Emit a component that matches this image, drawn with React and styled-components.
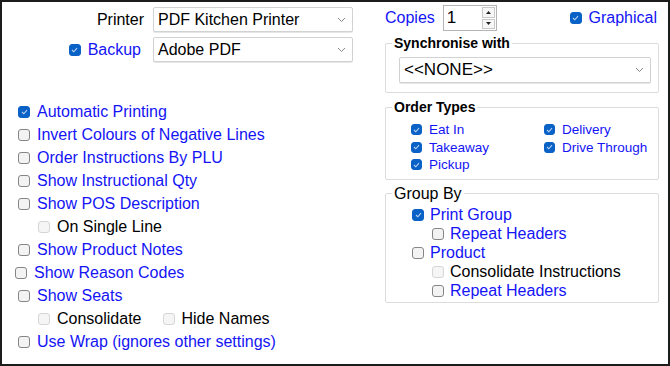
import React from "react";
import styled, { createGlobalStyle } from "styled-components";

const GlobalStyle = createGlobalStyle`
  html, body { margin: 0; padding: 0; background: #fff; }
  body { font-family: "Liberation Sans", Arial, sans-serif; }
`;

const Window = styled.div`
  width: 670px;
  height: 366px;
  box-sizing: border-box;
  border: 2px solid #1c1c1c;
  background: #fff;
  display: flex;
  font-family: "Liberation Sans", Arial, sans-serif;
  font-size: 16px;
  color: #000;
`;

const LeftColumn = styled.div`
  width: 382px;
  display: flex;
  flex-direction: column;
`;

const RightColumn = styled.div`
  width: 275px;
  display: flex;
  flex-direction: column;
`;

const PrinterGrid = styled.div`
  display: grid;
  grid-template-columns: 142px 200px;
  grid-auto-rows: 25px;
  column-gap: 9px;
  row-gap: 5px;
  padding-top: 5px;
`;

const FieldLabel = styled.div`
  justify-self: end;
  align-self: center;
  display: flex;
  align-items: center;
  gap: 7px;
  padding-right: ${(p) => p.$pad || 0}px;
  color: ${(p) => (p.$blue ? "#1414f5" : "#000")};
`;

const Select = styled.div`
  box-sizing: border-box;
  height: ${(p) => p.$h || 25}px;
  border: 1px solid #d2d2d2;
  border-radius: 2px;
  background: #fff;
  display: flex;
  align-items: center;
  justify-content: space-between;
  padding: 0 6px 0 4px;
  font-size: ${(p) => p.$size || 16}px;
  box-shadow: 0 1px 0 #e6e6e6;
`;

const Chevron = () => (
  <svg width="9" height="6" viewBox="0 0 9 6">
    <path d="M1 1 L4.5 4.5 L8 1" fill="none" stroke="#8a8a8a" strokeWidth="1" />
  </svg>
);

const OptionList = styled.div`
  margin-top: 38px;
  padding-left: 16px;
  display: flex;
  flex-direction: column;
`;

const Row = styled.div`
  height: ${(p) => p.$h || 23}px;
  display: flex;
  align-items: center;
  padding-left: ${(p) => p.$indent || 0}px;
  margin-left: ${(p) => p.$shift || 0}px;
  gap: ${(p) => p.$gap || 0}px;
`;

const Option = styled.label`
  display: flex;
  align-items: center;
  gap: ${(p) => p.$gap || 7}px;
  font-size: ${(p) => p.$size || 16}px;
  color: ${(p) => (p.$blue ? "#1414f5" : "#000")};
  white-space: nowrap;
`;

const Box = styled.span`
  box-sizing: border-box;
  width: ${(p) => p.$size || 12}px;
  height: ${(p) => p.$size || 12}px;
  border-radius: 3px;
  flex: none;
  display: flex;
  align-items: center;
  justify-content: center;
  background: ${(p) => (p.$checked ? "#0b62c6" : p.$disabled ? "#f5f5f5" : "#f3f3f3")};
  border: 1px solid
    ${(p) => (p.$checked ? "#0b62c6" : p.$disabled ? "#d6d6d6" : "#858585")};
`;

const Check = ({ checked, disabled, size }) => (
  <Box $checked={checked} $disabled={disabled} $size={size}>
    {checked && (
      <svg width="7" height="6" viewBox="0 0 7 6">
        <path d="M1 3 L2.8 4.8 L6 1.2" fill="none" stroke="#b9d3f2" strokeWidth="1.1" />
      </svg>
    )}
  </Box>
);

const Item = ({ label, checked, disabled, blue = true, size, box, gap }) => (
  <Option $blue={blue && !disabled} $size={size} $gap={gap}>
    <Check checked={checked} disabled={disabled} size={box} />
    {label}
  </Option>
);

const TopRow = styled.div`
  height: 26px;
  margin-top: 3px;
  padding-left: 1px;
  padding-right: 2px;
  display: flex;
  align-items: center;
`;

const CopiesLabel = styled.span`
  color: #1414f5;
  margin-right: 8px;
`;

const SpinBox = styled.div`
  box-sizing: border-box;
  width: 54px;
  height: 26px;
  border: 1px solid #b4b4b4;
  display: flex;
  background: #fff;
`;

const SpinValue = styled.div`
  flex: 1;
  padding-left: 3px;
  display: flex;
  align-items: center;
  font-size: 17px;
`;

const SpinButtons = styled.div`
  width: 13px;
  display: flex;
  flex-direction: column;
  gap: 1px;
  padding: 1px 1px 1px 0;
`;

const SpinButton = styled.div`
  flex: 1;
  border: 1px solid #c8c8c8;
  background: #f7f7f7;
  display: flex;
  align-items: center;
  justify-content: center;
`;

const Arrow = ({ up }) => (
  <svg width="5" height="3" viewBox="0 0 5 3">
    <path d={up ? "M0 3 L2.5 0 L5 3 Z" : "M0 0 L2.5 3 L5 0 Z"} fill="#222" />
  </svg>
);

const Spacer = styled.div`
  flex: 1;
`;

const Group = styled.fieldset`
  margin: ${(p) => p.$top || 0}px 0 0 1px;
  width: 274px;
  box-sizing: border-box;
  border: 1px solid #dcdcdc;
  border-radius: 2px;
  padding: 0;
  min-width: 0;
`;

const Legend = styled.legend`
  margin-left: 6px;
  padding: 0 2px;
  font-size: ${(p) => (p.$bold ? 14 : 16)}px;
  font-weight: ${(p) => (p.$bold ? 700 : 400)};
  line-height: ${(p) => (p.$bold ? 16 : 18)}px;
  color: #000;
`;

const GroupBody = styled.div`
  padding: ${(p) => p.$pad};
`;

const TypesGrid = styled.div`
  display: grid;
  grid-template-columns: 133px 1fr;
  grid-auto-rows: 17.5px;
  align-items: center;
`;

const GroupList = styled.div`
  display: flex;
  flex-direction: column;
`;

export default function App() {
  return (
    <>
      <GlobalStyle />
      <Window>
        <LeftColumn>
          <PrinterGrid>
            <FieldLabel>Printer</FieldLabel>
            <Select>
              PDF Kitchen Printer
              <Chevron />
            </Select>
            <FieldLabel $blue $pad={3}>
              <Check checked />
              Backup
            </FieldLabel>
            <Select>
              Adobe PDF
              <Chevron />
            </Select>
          </PrinterGrid>

          <OptionList>
            <Row>
              <Item label="Automatic Printing" checked />
            </Row>
            <Row>
              <Item label="Invert Colours of Negative Lines" />
            </Row>
            <Row>
              <Item label="Order Instructions By PLU" />
            </Row>
            <Row>
              <Item label="Show Instructional Qty" />
            </Row>
            <Row>
              <Item label="Show POS Description" />
            </Row>
            <Row $indent={20}>
              <Item label="On Single Line" disabled />
            </Row>
            <Row>
              <Item label="Show Product Notes" />
            </Row>
            <Row $shift={-3}>
              <Item label="Show Reason Codes" />
            </Row>
            <Row>
              <Item label="Show Seats" />
            </Row>
            <Row $indent={20} $gap={21}>
              <Item label="Consolidate" disabled />
              <Item label="Hide Names" disabled />
            </Row>
            <Row>
              <Item label="Use Wrap (ignores other settings)" />
            </Row>
          </OptionList>
        </LeftColumn>

        <RightColumn>
          <TopRow>
            <CopiesLabel>Copies</CopiesLabel>
            <SpinBox>
              <SpinValue>1</SpinValue>
              <SpinButtons>
                <SpinButton>
                  <Arrow up />
                </SpinButton>
                <SpinButton>
                  <Arrow />
                </SpinButton>
              </SpinButtons>
            </SpinBox>
            <Spacer />
            <Item label="Graphical" checked />
          </TopRow>

          <Group $top={4}>
            <Legend $bold>Synchronise with</Legend>
            <GroupBody $pad="6px 7px 9px 13px">
              <Select $h={26} $size={17}>
                {"<<NONE>>"}
                <Chevron />
              </Select>
            </GroupBody>
          </Group>

          <Group $top={6}>
            <Legend $bold>Order Types</Legend>
            <GroupBody $pad="6px 0 5px 25px">
              <TypesGrid>
                <Item label="Eat In" checked size={13.5} box={11} />
                <Item label="Delivery" checked size={13.5} box={11} />
                <Item label="Takeaway" checked size={13.5} box={11} />
                <Item label="Drive Through" checked size={13.5} box={11} />
                <Item label="Pickup" checked size={13.5} box={11} />
              </TypesGrid>
            </GroupBody>
          </Group>

          <Group $top={5}>
            <Legend>Group By</Legend>
            <GroupBody $pad="3px 0 1px 26px">
              <GroupList>
                <Row $h={19}>
                  <Item label="Print Group" checked gap={6} />
                </Row>
                <Row $h={19} $indent={20}>
                  <Item label="Repeat Headers" gap={6} />
                </Row>
                <Row $h={19}>
                  <Item label="Product" gap={6} />
                </Row>
                <Row $h={19} $indent={20}>
                  <Item label="Consolidate Instructions" disabled gap={6} />
                </Row>
                <Row $h={19} $indent={20}>
                  <Item label="Repeat Headers" gap={6} />
                </Row>
              </GroupList>
            </GroupBody>
          </Group>
        </RightColumn>
      </Window>
    </>
  );
}
